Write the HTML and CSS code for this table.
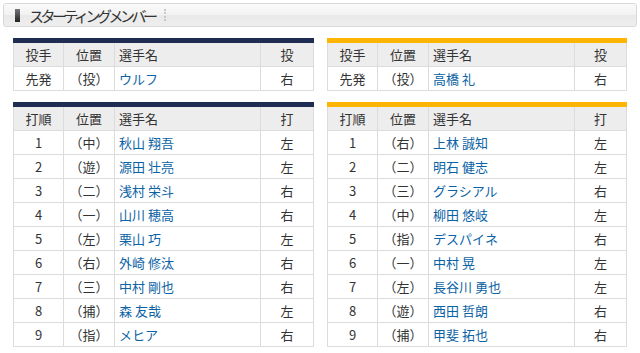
FILE: index.html
```html
<!DOCTYPE html>
<html lang="ja">
<head>
<meta charset="utf-8">
<link rel="stylesheet" href="styles.css">
</head>
<body>
<div class="title">
  <span class="title-mark"></span>
  <span class="title-text">スターティングメンバー</span>
  <span class="title-sep"></span>
</div>
<div class="teams">
  <div class="team home">
    <div class="block navy">
      <table class="lineup">
        <colgroup><col class="c1"><col class="c2"><col class="c3"><col class="c4"></colgroup>
        <tr class="head"><th>投手</th><th>位置</th><th class="name">選手名</th><th>投</th></tr>
        <tr><td>先発</td><td>（投）</td><td class="name"><a>ウルフ</a></td><td>右</td></tr>
      </table>
    </div>
    <div class="block navy">
      <table class="lineup">
        <colgroup><col class="c1"><col class="c2"><col class="c3"><col class="c4"></colgroup>
        <tr class="head"><th>打順</th><th>位置</th><th class="name">選手名</th><th>打</th></tr>
        <tr><td>1</td><td>（中）</td><td class="name"><a>秋山 翔吾</a></td><td>左</td></tr>
        <tr><td>2</td><td>（遊）</td><td class="name"><a>源田 壮亮</a></td><td>左</td></tr>
        <tr><td>3</td><td>（二）</td><td class="name"><a>浅村 栄斗</a></td><td>右</td></tr>
        <tr><td>4</td><td>（一）</td><td class="name"><a>山川 穂高</a></td><td>右</td></tr>
        <tr><td>5</td><td>（左）</td><td class="name"><a>栗山 巧</a></td><td>左</td></tr>
        <tr><td>6</td><td>（右）</td><td class="name"><a>外崎 修汰</a></td><td>右</td></tr>
        <tr><td>7</td><td>（三）</td><td class="name"><a>中村 剛也</a></td><td>右</td></tr>
        <tr><td>8</td><td>（捕）</td><td class="name"><a>森 友哉</a></td><td>左</td></tr>
        <tr><td>9</td><td>（指）</td><td class="name"><a>メヒア</a></td><td>右</td></tr>
      </table>
    </div>
  </div>
  <div class="team away">
    <div class="block orange">
      <table class="lineup">
        <colgroup><col class="c1"><col class="c2"><col class="c3"><col class="c4"></colgroup>
        <tr class="head"><th>投手</th><th>位置</th><th class="name">選手名</th><th>投</th></tr>
        <tr><td>先発</td><td>（投）</td><td class="name"><a>高橋 礼</a></td><td>右</td></tr>
      </table>
    </div>
    <div class="block orange">
      <table class="lineup">
        <colgroup><col class="c1"><col class="c2"><col class="c3"><col class="c4"></colgroup>
        <tr class="head"><th>打順</th><th>位置</th><th class="name">選手名</th><th>打</th></tr>
        <tr><td>1</td><td>（右）</td><td class="name"><a>上林 誠知</a></td><td>左</td></tr>
        <tr><td>2</td><td>（二）</td><td class="name"><a>明石 健志</a></td><td>左</td></tr>
        <tr><td>3</td><td>（三）</td><td class="name"><a>グラシアル</a></td><td>右</td></tr>
        <tr><td>4</td><td>（中）</td><td class="name"><a>柳田 悠岐</a></td><td>左</td></tr>
        <tr><td>5</td><td>（指）</td><td class="name"><a>デスパイネ</a></td><td>右</td></tr>
        <tr><td>6</td><td>（一）</td><td class="name"><a>中村 晃</a></td><td>左</td></tr>
        <tr><td>7</td><td>（左）</td><td class="name"><a>長谷川 勇也</a></td><td>左</td></tr>
        <tr><td>8</td><td>（遊）</td><td class="name"><a>西田 哲朗</a></td><td>右</td></tr>
        <tr><td>9</td><td>（捕）</td><td class="name"><a>甲斐 拓也</a></td><td>右</td></tr>
      </table>
    </div>
  </div>
</div>
</body>
</html>
```
FILE: styles.css
```css
html, body {
  margin: 0;
  padding: 0;
  background: #fff;
}
body {
  font-family: "Noto Sans CJK JP", "Noto Sans", sans-serif;
  color: #333;
}
.title {
  margin: 3px 3px 0 3px;
  height: 22px;
  border: 1px solid #d9d9d9;
  border-radius: 3px;
  background: linear-gradient(#fafafa 0%, #f2f2f2 50%, #e9e9e9 52%, #eeeeee 100%);
  display: flex;
  align-items: center;
  padding-left: 11px;
}
.title-mark {
  width: 5px;
  height: 13px;
  background: linear-gradient(#777, #222);
  margin-right: 9px;
}
.title-text {
  font-size: 15px;
  letter-spacing: -3.5px;
  color: #333;
  line-height: 1;
}
.title-sep {
  width: 0;
  height: 12px;
  border-left: 2px dotted #c8c8c8;
  margin-left: 9px;
}
.teams {
  display: flex;
  gap: 13px;
  padding: 11px 0 0 13px;
}
.team {
  width: 301px;
  display: flex;
  flex-direction: column;
  gap: 11px;
}
.team.away {
  width: 300px;
}
.block {
  border-top: 5px solid #1f2d52;
}
.block.orange {
  border-top-color: #ffb400;
}
.lineup {
  width: 100%;
  border-collapse: collapse;
  table-layout: fixed;
  font-size: 13px;
}
.c1 { width: 50px; }
.c2 { width: 51px; }
.c3 { width: 146px; }
.c4 { width: auto; }
.lineup th, .lineup td {
  border: 1px solid #dcdcdc;
  height: 23px;
  padding: 0;
  text-align: center;
  font-weight: normal;
  line-height: 23px;
  color: #333;
}
.lineup tr.head th {
  background: #ededed;
  border-top: none;
}
.lineup .name {
  text-align: left;
  padding-left: 4px;
}
.lineup a {
  color: #0b63a5;
  text-decoration: none;
}
```
